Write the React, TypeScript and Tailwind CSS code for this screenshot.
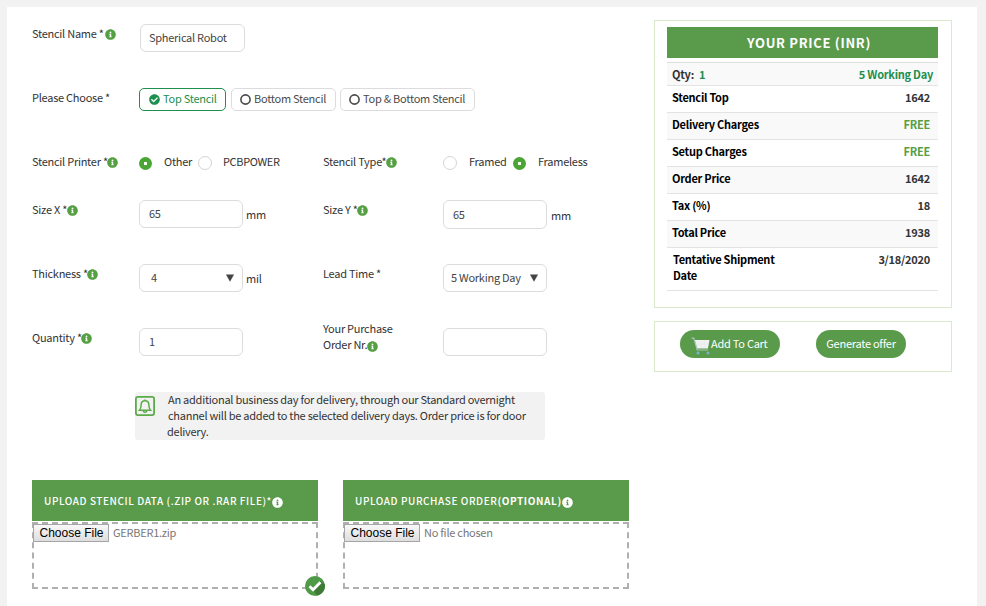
import type { ReactNode } from "react";
import { FaCheckCircle, FaInfoCircle } from "react-icons/fa";

function Info({ light = false }: { light?: boolean }) {
  return (
    <FaInfoCircle
      className={`inline-block size-[11px] shrink-0 ${light ? "text-white" : "text-[#56a044]"}`}
    />
  );
}

function Label({ children, info, gap = "gap-0" }: { children: ReactNode; info?: boolean; gap?: string }) {
  return (
    <span className={`mt-px flex h-4 items-center whitespace-nowrap ${gap}`}>
      {children}
      {info && <span className="-ml-[0.5px] flex pt-[3px]"><Info /></span>}
    </span>
  );
}

function Field({ value, className = "w-[104px] pl-[9px] pb-[2px]" }: { value: string; className?: string }) {
  return (
    <div className={`flex h-7 items-center rounded-md border border-[#dcdcdc] bg-white text-[#444] ${className}`}>
      {value}
    </div>
  );
}

function Select({ value, className = "" }: { value: string; className?: string }) {
  return (
    <div className={`flex h-7 w-[104px] items-center justify-between rounded-md border border-[#dcdcdc] bg-white pr-2 text-[#444] ${className}`}>
      <span className="pb-[2px]">{value}</span>
      <svg className="h-[8px] w-[8px]" viewBox="0 0 8 8"><path d="M0 .5h8L4 7.8z" fill="#444" /></svg>
    </div>
  );
}

function Radio({ on = false }: { on?: boolean }) {
  return on ? (
    <span className="mt-[5px] flex size-[13px] items-center justify-center rounded-full bg-[#49a635]">
      <span className="size-[3px] bg-white" />
    </span>
  ) : (
    <span className="mt-[4px] size-[14px] rounded-full border border-[#d4d4d4] bg-white" />
  );
}

function Chip({ children, active, className }: { children: ReactNode; active?: boolean; className: string }) {
  return (
    <div
      className={`flex h-[23px] items-center gap-[3px] whitespace-nowrap rounded-[5px] border pb-px pl-[9px] ${
        active ? "border-[#1d8f4e] text-[#1d8f4e]" : "border-[#dcdcdc] text-[#4a4a4a]"
      } ${className}`}
    >
      {active ? (
        <FaCheckCircle className="size-[11px]" />
      ) : (
        <svg className="-ml-px size-[11px]" viewBox="0 0 11 11"><circle cx="5.5" cy="5.5" r="4.6" fill="none" stroke="#4a4a4a" strokeWidth="1.6" /></svg>
      )}
      <span className="pb-[2px]">{children}</span>
    </div>
  );
}

function Upload({ title, file, done }: { title: ReactNode; file: string; done?: boolean }) {
  return (
    <div className="relative w-[286px]">
      <div className="flex h-[41px] items-center whitespace-nowrap bg-[#5a9a4b] pl-3 text-[10px] font-medium tracking-[0.57px] text-white">
        <span>{title}</span>
        <span className="flex pt-[3px]"><Info light /></span>
      </div>
      <div className="mt-px h-[67px] border-2 border-dashed border-[#b0b0b0]">
        <div className="-ml-px flex items-center gap-1 text-[11px] text-[#777]">
          <span className="flex h-[18px] w-[76px] items-center justify-center border border-[#a5a5a5] bg-gradient-to-b from-[#f8f8f8] to-[#dedede] pl-px font-['Liberation_Sans',sans-serif] text-[12px] tracking-normal text-black">
            Choose File
          </span>
          <span className="pb-[2px]">{file}</span>
        </div>
      </div>
      {done && (
        <svg className="absolute -bottom-[7px] -right-[7px] size-5" viewBox="0 0 20 20">
          <circle cx="10" cy="10" r="10" fill="#4f9a47" />
          <path d="M8.4 14.8l3.8 4.9A10 10 0 0 0 19.8 8.3L15.5 5z" fill="#3c7a36" />
          <path d="M4.5 10.2l3.6 3.6 7.4-7.6" fill="none" stroke="#fff" strokeWidth="2.8" />
        </svg>
      )}
    </div>
  );
}

const prices = [
  ["Stencil Top", "1642"],
  ["Delivery Charges", "FREE"],
  ["Setup Charges", "FREE"],
  ["Order Price", "1642"],
  ["Tax (%)", "18"],
  ["Total Price", "1938"],
];

export default function App() {
  return (
    <div className="h-[606px] w-[986px] overflow-hidden bg-[#f2f2f2] pl-[7px] pr-[9px] pt-[7px] font-['Noto_Sans_CJK_SC',sans-serif] text-[11px] leading-4 tracking-[-0.26px] text-[#333]">
      <div className="flex h-full bg-white pl-[25px]">
        <main className="w-[622px] pt-[17px]">
          <section className="flex h-16">
            <div className="w-[108px]"><Label info gap="gap-[2px]">Stencil Name *</Label></div>
            <Field value="Spherical Robot" className="w-[105px] pb-[2px] pl-2" />
          </section>
          <section className="flex h-16">
            <div className="w-[107px]"><Label>Please Choose *</Label></div>
            <div className="flex">
              <Chip active className="w-[87px]">Top Stencil</Chip>
              <Chip className="ml-[5px] w-[105px]">Bottom Stencil</Chip>
              <Chip className="ml-1 w-[135px]">Top &amp; Bottom Stencil</Chip>
            </div>
          </section>
          <section className="flex h-12">
            <div className="w-[107px]"><Label info>Stencil Printer *</Label></div>
            <div className="flex w-[184px]">
              <Radio on />
              <span className="ml-3 mt-px w-[34px]">Other</span>
              <Radio />
              <span className="ml-[11px] mt-px tracking-[-0.35px]">PCBPOWER</span>
            </div>
            <div className="w-[120px]"><Label info>Stencil Type*</Label></div>
            <div className="flex">
              <Radio />
              <span className="ml-3 mt-px w-[44px]">Framed</span>
              <Radio on />
              <span className="ml-3 mt-px">Frameless</span>
            </div>
          </section>
          <section className="flex h-16">
            <div className="w-[107px]"><Label info>Size X *</Label></div>
            <div className="flex w-[184px] gap-[3px]"><Field value="65" /><span className="mt-[6px]">mm</span></div>
            <div className="w-[120px]"><Label info>Size Y *</Label></div>
            <div className="flex gap-1"><Field value="65" className="h-[29px] w-[104px] pb-px pl-[9px]" /><span className="mt-[7px]">mm</span></div>
          </section>
          <section className="flex h-16">
            <div className="w-[107px]"><Label info>Thickness *</Label></div>
            <div className="flex w-[184px] gap-[3px]"><Select value="4" className="pl-[11px]" /><span className="mt-[6px]">mil</span></div>
            <div className="w-[120px]"><Label>Lead Time *</Label></div>
            <Select value="5 Working Day" className="pl-[7px]" />
          </section>
          <section className="flex h-16">
            <div className="w-[107px]"><Label info>Quantity *</Label></div>
            <div className="w-[184px]"><Field value="1" /></div>
            <div className="-mt-2 w-[120px]">
              Your Purchase
              <div className="flex h-4 items-center">Order Nr.<span className="flex pt-[4px]"><Info /></span></div>
            </div>
            <Field value="" />
          </section>
          <div className="ml-[103px] flex h-12 w-[410px] rounded-[3px] bg-[#f2f2f2]">
            <svg className="mt-1 size-5" viewBox="0 0 20 20" fill="none" stroke="#5cab4b">
              <rect x=".9" y=".9" width="18.2" height="18.2" rx="2" strokeWidth="1.8" />
              <path d="M4.5 14.2h11c-1.6-1.7-1.6-2.7-1.6-5.1 0-2.3-1.5-4-3.2-4.3-.1-.9-1.3-.9-1.4 0-1.7.3-3.2 2-3.2 4.3 0 2.4 0 3.4-1.6 5.1z" strokeWidth="1.5" />
              <path d="M8.2 15c.4 1.6 3.2 1.6 3.6 0" strokeWidth="1.5" />
            </svg>
            <div className="-mt-px ml-[13px] whitespace-nowrap">
              An additional business day for delivery, through our Standard overnight<br />
              channel will be added to the selected delivery days. Order price is for door<br />
              <span className="-ml-px">delivery.</span>
            </div>
          </div>
          <section className="mt-10 flex gap-[25px]">
            <Upload title="UPLOAD STENCIL DATA (.ZIP OR .RAR FILE)*" file="GERBER1.zip" done />
            <Upload title={<>UPLOAD PURCHASE ORDER<b>(OPTIONAL)</b></>} file="No file chosen" />
          </section>
        </main>
        <aside className="w-[298px] pt-[13px]">
          <div className="h-[288px] border border-[#d9e9ce] px-3 pt-[6px] font-bold">
            <h2 className="flex h-[31px] w-[271px] items-center justify-center bg-[#5a9a4b] pl-[13px] text-[13px] tracking-[0.7px] text-white">
              YOUR PRICE (INR)
            </h2>
            <div className="mt-1 w-[271px] border-t border-[#dedede]">
              <div className="flex h-[23px] items-center justify-between border-b border-[#e3e3e3] bg-[#f9f9f9] px-[5px]">
                <span>Qty:<span className="ml-[5px] text-[#1d8f4e]">1</span></span>
                <span className="text-[#1d8f4e]">5 Working Day</span>
              </div>
              {prices.map(([name, value], i) => (
                <div key={name} className={`flex h-[27px] items-center justify-between border-b border-[#e3e3e3] pb-[4px] pl-[5px] pr-2 ${i % 2 ? "bg-[#f9f9f9]" : ""}`}>
                  <span className="text-black">{name}</span>
                  <span className={value === "FREE" ? "text-[#56a044]" : ""}>{value}</span>
                </div>
              ))}
              <div className="flex h-[43px] justify-between border-b border-[#e3e3e3] pl-[6px] pr-2 pt-[3px]">
                <span className="w-[120px] text-black">Tentative Shipment Date</span>
                <span>3/18/2020</span>
              </div>
            </div>
          </div>
          <div className="mt-[13px] flex h-[51px] gap-9 border border-[#d9e9ce] pl-[25px] pt-2 text-white">
            <div className="flex h-7 w-[100px] items-center whitespace-nowrap rounded-full bg-[#5a9a4b] pl-[11px]">
              <svg className="mt-[3px] h-[18px] w-5" viewBox="0 0 20 18" fill="none">
                <path d="M3.5 3h15l-1.6 8.5H6z" fill="#f2f2f2" />
                <path d="M.5 1.2h2.3L6.2 13h11" stroke="#a9c3bd" strokeWidth="1.2" />
                <path d="M6.5 3.5l1 7.5M10 3.5l.3 7.5M13.5 3.5l-.3 7.5M4.5 7h13" stroke="#e0e6e4" strokeWidth=".5" />
                <circle cx="7" cy="16" r="1.5" fill="#76b5d0" /><circle cx="17" cy="16" r="1.5" fill="#76b5d0" />
              </svg>
              <span className="pb-[2px]">Add To Cart</span>
            </div>
            <div className="flex h-7 w-[90px] items-center justify-center whitespace-nowrap rounded-full bg-[#5a9a4b] pb-[2px]">Generate offer</div>
          </div>
        </aside>
      </div>
    </div>
  );
}
